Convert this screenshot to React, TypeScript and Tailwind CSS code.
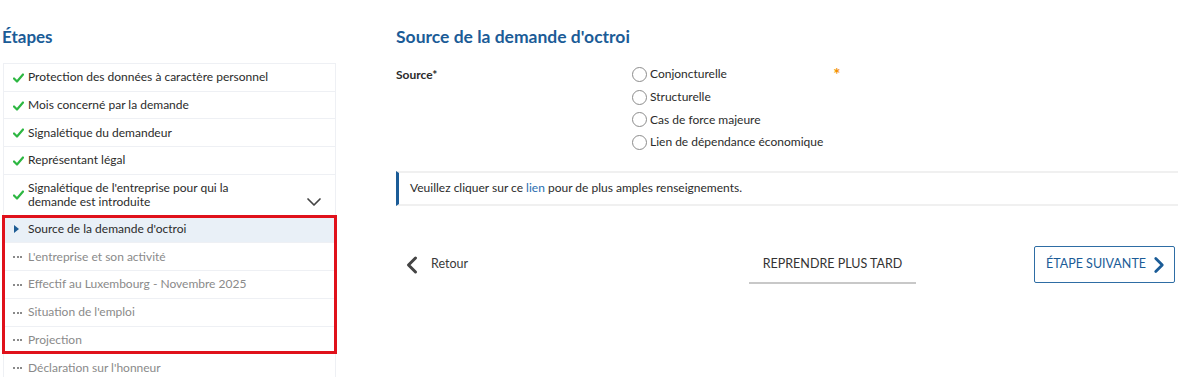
import { ChevronDown, ChevronLeft, ChevronRight } from 'lucide-react';

type StepStatus = 'done' | 'current' | 'todo';

interface Step {
    label: string;
    status: StepStatus;
    expandable?: boolean;
}

const steps: Step[] = [
    { label: 'Protection des données à caractère personnel', status: 'done' },
    { label: 'Mois concerné par la demande', status: 'done' },
    { label: 'Signalétique du demandeur', status: 'done' },
    { label: 'Représentant légal', status: 'done' },
    { label: "Signalétique de l'entreprise pour qui la demande est introduite", status: 'done', expandable: true },
    { label: "Source de la demande d'octroi", status: 'current' },
    { label: "L'entreprise et son activité", status: 'todo' },
    { label: 'Effectif au Luxembourg - Novembre 2025', status: 'todo' },
    { label: "Situation de l'emploi", status: 'todo' },
    { label: 'Projection', status: 'todo' },
    { label: "Déclaration sur l'honneur", status: 'todo' },
];

const sources = ['Conjoncturelle', 'Structurelle', 'Cas de force majeure', 'Lien de dépendance économique'];

function StepIcon({ status }: { status: StepStatus }) {
    if (status === 'done') {
        return (
            <svg width="11" height="10" viewBox="0 0 11 10" className="mt-[1px]">
                <path d="M1 5.5 L4 8.5 L10 1.5" fill="none" stroke="#2db742" strokeWidth="2.2" strokeLinecap="round" strokeLinejoin="round" />
            </svg>
        );
    }
    if (status === 'current') {
        return <span className="ml-[1px] h-0 w-0 border-y-[4px] border-l-[5px] border-y-transparent border-l-[#1d5c94]" />;
    }
    return (
        <span className="flex gap-[1.5px] pt-[1px]">
            <span className="h-[2px] w-[2px] bg-[#8a8a8a]" />
            <span className="h-[2px] w-[2px] bg-[#8a8a8a]" />
            <span className="h-[2px] w-[2px] bg-[#8a8a8a]" />
        </span>
    );
}

function StepRow({ step }: { step: Step }) {
    const textClass = step.status === 'todo' ? 'text-[#8a8a8a]' : 'text-[#2b2b2b]';
    const bgClass = step.status === 'current' ? 'bg-[#e9f0f7]' : 'bg-white';
    return (
        <li className={`flex items-center border-b border-[#eef0f4] pl-[9px] pr-[9px] ${bgClass} ${step.expandable ? 'h-[41px]' : 'h-[27.7px]'}`}>
            <span className="flex w-[15px] shrink-0 items-center justify-start">
                <StepIcon status={step.status} />
            </span>
            <span className={`text-[12px] leading-[14px] ${textClass} ${step.expandable ? 'max-w-[230px] self-start pt-[6px]' : ''}`}>
                {step.label}
            </span>
            {step.expandable && <ChevronDown size={24} strokeWidth={1.7} className="ml-auto mt-[14px] text-[#444]" />}
        </li>
    );
}

function StepList() {
    return (
        <aside className="w-[336px] shrink-0 pl-[2px]">
            <h2 className="mt-[24px] h-[39px] text-[17px] font-bold text-[#1b5c97]">Étapes</h2>
            <ul className="relative ml-[1px] w-[333px] border-x border-t border-[#eef0f4]">
                {steps.slice(0, 5).map((step) => (
                    <StepRow key={step.label} step={step} />
                ))}
                <div className="relative">
                    {steps.slice(5, 10).map((step) => (
                        <StepRow key={step.label} step={step} />
                    ))}
                    <div className="pointer-events-none absolute -left-[2px] -right-[2px] -top-[1px] bottom-0 border-[3px] border-[#e0111b]" />
                </div>
                {steps.slice(10).map((step) => (
                    <StepRow key={step.label} step={step} />
                ))}
            </ul>
        </aside>
    );
}

function SourceForm() {
    return (
        <main className="flex-1 pl-[60px] pt-[24px]">
            <h1 className="h-[39px] text-[17.5px] font-bold text-[#1b5c97]">Source de la demande d'octroi</h1>
            <div className="flex">
                <div className="w-[236px] pt-[3px] text-[12px] font-bold text-[#2b2b2b]">Source*</div>
                <div className="flex flex-col">
                    {sources.map((source) => (
                        <label key={source} className="flex h-[22.7px] items-center gap-[3px] text-[12px] text-[#2b2b2b]">
                            <span className="h-[15px] w-[15px] rounded-full border border-[#8c8c8c] bg-white" />
                            {source}
                        </label>
                    ))}
                </div>
                <span className="ml-[10px] pt-[3px] text-[17px] font-bold leading-none text-[#f39200]">*</span>
            </div>
            <div className="mt-[17px] flex h-[35px] items-center border-y-2 border-l-[3px] border-y-[#f0f0f0] border-l-[#1b5c97] pl-[11px] text-[12px] text-[#2b2b2b]">
                Veuillez cliquer sur ce&nbsp;<span className="text-[#2a6eb0]">lien</span>&nbsp;pour de plus amples renseignements.
            </div>
            <div className="mt-[40px] flex items-center">
                <button className="flex items-center gap-[5px] pl-[8px] text-[12.5px] text-[#3a3a3a]">
                    <ChevronLeft size={28} strokeWidth={2.6} className="-ml-[6px] text-[#444]" />
                    Retour
                </button>
                <button className="ml-[281px] h-[38px] w-[167px] whitespace-nowrap border-b-2 border-[#c8c8c8] pt-[2px] text-[12.5px] text-[#333]">
                    REPRENDRE PLUS TARD
                </button>
                <button className="ml-auto mr-[3px] flex h-[37px] w-[141px] items-center justify-between whitespace-nowrap rounded-[2px] border border-[#2e6da4] pl-[11px] pr-[7px] text-[12.5px] text-[#1b5c97]">
                    ÉTAPE SUIVANTE
                    <ChevronRight size={28} strokeWidth={2.6} className="-mr-[5px] text-[#1b5c97]" />
                </button>
            </div>
        </main>
    );
}

export default function App() {
    return (
        <div className="flex h-[377px] w-[1178px] overflow-hidden bg-white font-['Lato','Liberation_Sans',sans-serif]">
            <StepList />
            <SourceForm />
        </div>
    );
}
